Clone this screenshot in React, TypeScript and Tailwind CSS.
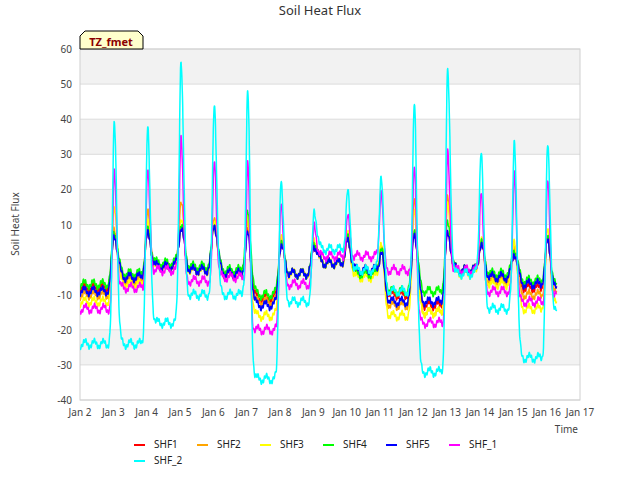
import React from "react";

const X0 = 80, X1 = 580, Y0 = 49, Y1 = 400;
const xs = (d: number) => X0 + (d - 2) * (X1 - X0) / 15;
const ys = (v: number) => Y1 - (v + 40) * (Y1 - Y0) / 100;

type S = { name: string; color: string; P: number[]; T: number[]; w: number };
const days = [3, 4, 5, 6, 7, 8, 9, 10, 11, 12, 13, 14, 15, 16];
const series: S[] = [
  { name: "SHF1", color: "#ff0000", P: [7, 7, 9, 10, 8, 4, 4, 5, 2, 8, 7, 4, 2, 5], T: [-8, -5, -2, -3, -4, -11, -4, -1, -4, -10, -13, -3, -5, -8, -9], w: 0.09 },
  { name: "SHF2", color: "#ffa500", P: [9, 13, 17, 12, 10, 5, 5, 6, 4, 18, 17, 5, 4, 6], T: [-10, -6, -2, -3, -4, -12, -4, -1, -3, -13, -15, -3, -6, -10, -10], w: 0.08 },
  { name: "SHF3", color: "#ffff00", P: [15, 10, 12, 11, 12, 7, 6, 7, 5, 15, 15, 6, 6, 8], T: [-12, -7, -2, -3, -4, -16, -4, -1, -5, -16, -15, -4, -7, -14, -13], w: 0.08 },
  { name: "SHF4", color: "#00ff00", P: [8, 8, 10, 10, 13, 5, 5, 6, 3, 9, 10, 5, 3, 6], T: [-7, -4, -1, -2, -3, -10, -4, -1, -4, -9, -9, -3, -4, -6, -8], w: 0.09 },
  { name: "SHF5", color: "#0000ff", P: [7, 7, 9, 10, 7, 4, 4, 5, 2, 8, 7, 4, 2, 5], T: [-9, -5, -2, -3, -4, -13, -4, -1, -3, -12, -12, -3, -5, -7, -9], w: 0.09 },
  { name: "SHF_1", color: "#ff00ff", P: [25, 25, 36, 28, 27, 17, 10, 12, 20, 27, 30, 20, 25, 22], T: [-14, -8, -3, -6, -5, -20, -7, 1, 1, -3, -18, -3, -9, -12, -10], w: 0.06 },
  { name: "SHF_2", color: "#00ffff", P: [39, 37, 57, 44, 47, 23, 14, 19, 24, 45, 53, 31, 34, 32], T: [-24, -24, -18, -10, -10, -34, -12, 3, -3, -9, -32, -4, -14, -28, -15], w: 0.07 },
];

function val(s: S, t: number) {
  // T[0] before Jan 3 (at 2.5), T[i] at i+2.5
  let base: number;
  if (t <= 2.5) base = s.T[0];
  else {
    const i = Math.min(s.T.length - 2, Math.floor(t - 2.5));
    const f = Math.max(0, Math.min(1, (t - (i + 2.5))));
    // keep trough mostly flat, transition near the peak
    const ff = f < 0.4 ? 0 : f > 0.6 ? 1 : (f - 0.4) / 0.2;
    base = s.T[i] * (1 - ff) + s.T[i + 1] * ff;
  }
  let v = base;
  days.forEach((d, j) => {
    const tk = d + 0.03;
    const dt = t - tk;
    const w = dt < 0 ? s.w * 1.1 : s.w * 1.5;
    const g = Math.exp(-(dt / w) * (dt / w));
    v += (s.P[j] - base) * g;
  });
  v += Math.sin(t * 97.3 + s.w * 50) * 0.6 + Math.sin(t * 23.1 + s.w * 30) * 1.0;
  return v;
}

function path(s: S) {
  const pts: string[] = [];
  for (let t = 2.0; t <= 16.3; t += 0.008) {
    pts.push(`${xs(t).toFixed(1)},${ys(val(s, t)).toFixed(1)}`);
  }
  return "M" + pts.join("L");
}

export default function App() {
  const bands = [50, 30, 10, -10, -30];
  const yt = [60, 50, 40, 30, 20, 10, 0, -10, -20, -30, -40];
  const xt = Array.from({ length: 16 }, (_, i) => i + 2);
  const leg1 = series.slice(0, 6);
  return (
    <div className="w-[640px] h-[480px] bg-white font-['DejaVu_Sans',sans-serif]">
      <svg width="640" height="480">
        <text x="320" y="15" textAnchor="middle" fontSize="13" fill="#333">Soil Heat Flux</text>
        <rect x={X0} y={Y0} width={X1 - X0} height={Y1 - Y0} fill="#fff" />
        {bands.map((b) => (
          <rect key={b} x={X0} y={ys(b + 10)} width={X1 - X0} height={ys(b) - ys(b + 10)} fill="#f2f2f2" />
        ))}
        {yt.map((v) => (
          <g key={v}>
            <line x1={X0} x2={X1} y1={ys(v)} y2={ys(v)} stroke="#dcdcdc" strokeWidth="1" />
            <text x={X0 - 8} y={ys(v) + 4} textAnchor="end" fontSize="10" fill="#444">{v}</text>
          </g>
        ))}
        {xt.map((d) => (
          <text key={d} x={xs(d)} y={416} textAnchor="middle" fontSize="10" fill="#444">Jan {d}</text>
        ))}
        <rect x={X0} y={Y0} width={X1 - X0} height={Y1 - Y0} fill="none" stroke="#d0d0d0" />
        <clipPath id="c"><rect x={X0} y={Y0} width={X1 - X0} height={Y1 - Y0} /></clipPath>
        <g clipPath="url(#c)" fill="none" strokeWidth="1.5" strokeLinejoin="round">
          {series.map((s) => <path key={s.name} d={path(s)} stroke={s.color} />)}
        </g>
        <text x="578" y="433" textAnchor="end" fontSize="10" fill="#444">Time</text>
        <text transform="translate(19,224) rotate(-90)" textAnchor="middle" fontSize="10" fill="#444">Soil Heat Flux</text>
        <path d="M80,49 L80,36 L85,31 L138,31 L143,36 L143,49 Z" fill="#ffffcc" stroke="#000" strokeWidth="1" />
        <text x="111" y="46" textAnchor="middle" fontSize="11" fontWeight="bold" fill="#8b0000">TZ_fmet</text>
        {leg1.map((s, i) => (
          <g key={s.name}>
            <line x1={134 + i * 63} x2={145 + i * 63} y1={445} y2={445} stroke={s.color} strokeWidth="2" />
            <text x={154 + i * 63} y={448} fontSize="10" fill="#222">{s.name}</text>
          </g>
        ))}
        <line x1={134} x2={145} y1={461} y2={461} stroke="#00ffff" strokeWidth="2" />
        <text x={154} y={464} fontSize="10" fill="#222">SHF_2</text>
      </svg>
    </div>
  );
}
